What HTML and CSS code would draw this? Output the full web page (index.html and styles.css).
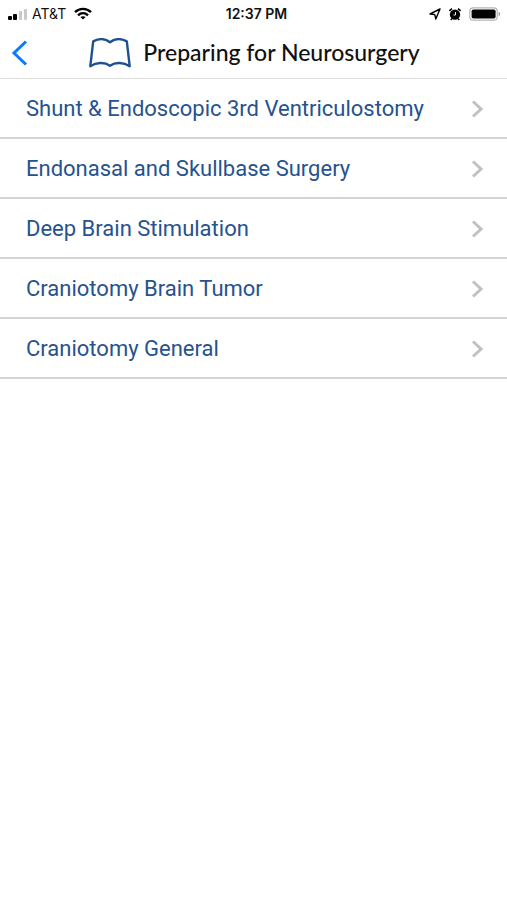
FILE: index.html
```html
<!DOCTYPE html>
<html lang="en">
<head>
<meta charset="utf-8">
<meta name="viewport" content="width=device-width, initial-scale=1">
<title>Preparing for Neurosurgery</title>
<link rel="stylesheet" href="styles.css">
</head>
<body>
<div class="status">
  <div class="status-left">
    <svg width="20" height="12" viewBox="0 0 20 12" aria-hidden="true"><rect x="0" y="8" width="4" height="4" rx="1"/><rect x="5" y="6" width="4" height="6" rx="1"/><rect x="11" y="3" width="3" height="9" rx="1" fill="#c9c9c9"/><rect x="16" y="1" width="3" height="11" rx="1" fill="#c9c9c9"/></svg>
    <span>AT&amp;T</span>
    <svg class="wifi" width="18" height="13" viewBox="0 0 18 13" fill="none" stroke="#000" stroke-width="2.4" aria-hidden="true"><path d="M1 5.2C5.6.7 12.400.7 17 5.200M4 8.300c2.900-2.800 7.100-2.800 10 0"/><path d="M9 12.600 6.400 10.100c1.500-1.300 3.700-1.300 5.200 0z" fill="#000" stroke="none"/></svg>
  </div>
  <span class="time">12:37 PM</span>
  <div class="status-right">
    <svg width="12" height="12" viewBox="0 0 12 12" fill="none" stroke="#000" stroke-width="1.4" stroke-linejoin="round" aria-hidden="true"><path d="M11 1 1 6l4.800.6L6.800 11z"/></svg>
    <svg width="14" height="14" viewBox="0 0 14 14" aria-hidden="true"><circle cx="7" cy="7.600" r="5.200"/><path d="M1.400 3.800 4 1.600M12.600 3.800 10 1.600M3.800 11.600l-1 1.400M10.200 11.600l1 1.400" stroke="#000" stroke-width="1.600"/><path d="M7.500 5v3H5.400" fill="none" stroke="#fff" stroke-width=".9"/></svg>
    <svg class="battery" width="32" height="14" viewBox="0 0 32 14" aria-hidden="true"><rect x=".8" y=".8" width="27.400" height="12.400" rx="3.500" fill="#fff" stroke="#b5b5b5" stroke-width="1.200"/><rect x="2.600" y="2.400" width="24" height="9.200" rx="1.800"/><path d="M29.600 5c2 .6 2 3.400 0 4z" fill="#999"/></svg>
  </div>
</div>
<header class="nav">
  <button class="back" type="button" aria-label="Back"><svg width="18" height="26" viewBox="0 0 18 26" fill="none" stroke="#0a7aff" stroke-width="3" aria-hidden="true"><path d="M15 1.500 3 13l12 11.500"/></svg></button>
  <div class="heading">
    <svg width="42" height="30" viewBox="0 0 42 30" fill="none" stroke="#1f5091" stroke-width="2.400" stroke-linejoin="round" aria-hidden="true"><path d="M4.200 3.400C9.500.6 16 .4 21 4.200 26 .4 32.500.6 37.800 3.400L40.700 28.200C34.800 24.400 26.500 23.800 21 27.700 15.500 23.800 7.200 24.400 1.300 28.200z"/></svg>
    <h1>Preparing for Neurosurgery</h1>
  </div>
</header>
<main>
  <ul class="list">
    <li><a href="#shunt">Shunt &amp; Endoscopic 3rd Ventriculostomy<svg class="chevron" viewBox="0 0 12 18" aria-hidden="true"><path d="m2 1.500 8 7.500-8 7.500"/></svg></a></li>
    <li><a href="#endonasal">Endonasal and Skullbase Surgery<svg class="chevron" viewBox="0 0 12 18" aria-hidden="true"><path d="m2 1.500 8 7.500-8 7.500"/></svg></a></li>
    <li><a href="#stimulation">Deep Brain Stimulation<svg class="chevron" viewBox="0 0 12 18" aria-hidden="true"><path d="m2 1.500 8 7.500-8 7.500"/></svg></a></li>
    <li><a href="#tumor">Craniotomy Brain Tumor<svg class="chevron" viewBox="0 0 12 18" aria-hidden="true"><path d="m2 1.500 8 7.500-8 7.500"/></svg></a></li>
    <li><a href="#general">Craniotomy General<svg class="chevron" viewBox="0 0 12 18" aria-hidden="true"><path d="m2 1.500 8 7.500-8 7.500"/></svg></a></li>
  </ul>
</main>
</body>
</html>
```
FILE: styles.css
```css
* { box-sizing: border-box; }
body {
  margin: 0;
  background: #fff;
  color: #111;
  font-family: Inter, "Liberation Sans", sans-serif;
}
svg { display: block; flex: none; }
.status {
  display: grid;
  grid-template-columns: 1fr auto 1fr;
  align-items: center;
  height: 27px;
  padding: 0 6px 0 8px;
  font-size: 14px;
  line-height: 26px;
}
.status-left, .status-right { display: flex; align-items: center; }
.status-left { gap: 4px; }
.wifi { margin-left: 4px; }
.status-right { justify-content: flex-end; gap: 7px; }
.time {
  padding-left: 4px;
  font-weight: 600;
}
.nav {
  display: grid;
  grid-template-columns: 40px 1fr 38px;
  align-items: center;
  height: 52px;
  border-bottom: 1px solid #dedede;
}
.back {
  display: flex;
  padding: 0 0 0 11px;
  border: 0;
  background: none;
}
.heading {
  display: flex;
  align-items: center;
  justify-content: center;
  gap: 12px;
}
h1 {
  margin: 0;
  padding-bottom: 2px;
  font: 500 23px/32px Lato, sans-serif;
  white-space: nowrap;
}
.list { margin: 0; padding: 0; list-style: none; }
.list a {
  display: flex;
  align-items: center;
  justify-content: space-between;
  height: 60px;
  padding: 1px 24px 0 26px;
  border-bottom: 2px solid #d5d5d7;
  color: #26528f;
  font-family: Roboto, "Liberation Sans", sans-serif;
  font-size: 22px;
  line-height: 28px;
  text-decoration: none;
}
.chevron {
  width: 12px;
  height: 18px;
  fill: none;
  stroke: #bfc2c5;
  stroke-width: 3;
}
```
